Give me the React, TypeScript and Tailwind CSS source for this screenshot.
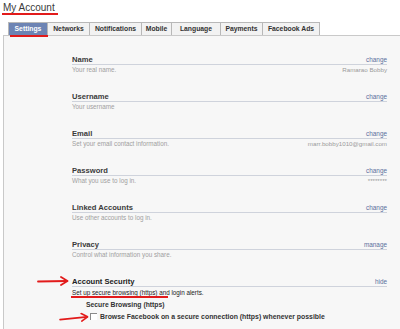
const tabs = [
  { name: 'Settings', w: 'w-[40px]', active: true },
  { name: 'Networks', w: 'w-[42px]' },
  { name: 'Notifications', w: 'w-[52px]' },
  { name: 'Mobile', w: 'w-[30px]' },
  { name: 'Language', w: 'w-[49px]' },
  { name: 'Payments', w: 'w-[42px]' },
  { name: 'Facebook Ads', w: 'w-[57px]' },
];

const rows = [
  { label: 'Name', link: 'change', desc: 'Your real name.', value: 'Ramarao Bobby' },
  { label: 'Username', link: 'change', desc: 'Your username', value: '' },
  { label: 'Email', link: 'change', desc: 'Set your email contact information.', value: 'marr.bobby1010@gmail.com' },
  { label: 'Password', link: 'change', desc: 'What you use to log in.', value: '********' },
  { label: 'Linked Accounts', link: 'change', desc: 'Use other accounts to log in.', value: '' },
  { label: 'Privacy', link: 'manage', desc: 'Control what information you share.', value: '' },
];

const Arrow = ({ className }: { className: string }) => (
  <svg className={className} viewBox="0 0 32 10" fill="none">
    <path d="M1 5.5 L30 5" stroke="#e21b1b" strokeWidth="1.8" strokeLinecap="round" />
    <path d="M24 1 L30.5 5 L24 9" stroke="#e21b1b" strokeWidth="1.8" strokeLinecap="round" strokeLinejoin="round" />
  </svg>
);

const App = () => {
  return (
    <div className="relative h-[329px] w-[400px] overflow-hidden bg-white font-['Liberation_Sans',Arial,sans-serif]">
      {/* title */}
      <div className="h-[22px] pl-[3px] pt-[2px] text-[10px] leading-[11px] text-[#3a3a3a]">My Account</div>

      {/* tabs */}
      <div className="flex h-[13px] pl-[8px]">
        {tabs.map((t) => (
          <div
            key={t.name}
            className={`${t.w} flex items-center justify-center border-t border-r border-[#b8b8b8] text-[6.8px] font-bold leading-none ${
              t.active ? 'border-l border-[#5a6f9e] bg-[#6d84b4] text-white' : 'bg-[#f2f2f2] text-[#333]'
            }`}
          >
            {t.name}
          </div>
        ))}
      </div>

      {/* content */}
      <div className="ml-[3px] h-[300px] border-t border-l border-[#c9c9c9] bg-[#f7f7f7] pl-[68px] pr-[13px] pt-[19px]">
        {rows.map((r) => (
          <div key={r.label} className="h-[37px]">
            <div className="flex h-[10px] items-end justify-between border-b border-[#cfd3dc]">
              <span className="text-[7.6px] font-bold leading-[9px] text-[#3a3a3a]">{r.label}</span>
              <span className="text-[6.4px] leading-[9px] text-[#5b6f9d]">{r.link}</span>
            </div>
            <div className="flex h-[9px] items-center justify-between">
              <span className="text-[6.3px] leading-[9px] text-[#a0a0a0]">{r.desc}</span>
              <span className="text-[6.2px] leading-[9px] text-[#9a9a9a]">{r.value}</span>
            </div>
          </div>
        ))}

        <div>
          <div className="flex h-[10px] items-end justify-between border-b border-[#cfd3dc]">
            <span className="text-[7.6px] font-bold leading-[9px] text-[#222]">Account Security</span>
            <span className="text-[6.4px] leading-[9px] text-[#5b6f9d]">hide</span>
          </div>
          <div className="flex h-[10px] items-center">
            <span className="text-[6.3px] leading-[9px] text-[#222]">Set up secure browsing (https) and login alerts.</span>
          </div>
          <div className="flex h-[14px] items-center pl-[14px]">
            <span className="text-[6.8px] font-bold leading-[9px] text-[#333]">Secure Browsing (https)</span>
          </div>
          <div className="flex h-[10px] items-center gap-[3px] pl-[18px]">
            <span className="h-[7px] w-[7px] border-t border-l border-[#8a8a8a] bg-white" />
            <span className="text-[6.9px] font-bold leading-[9px] text-[#333]">
              Browse Facebook on a secure connection (https) whenever possible
            </span>
          </div>
        </div>
      </div>

      {/* red annotations */}
      <div className="absolute left-[2px] top-[13px] h-[2px] w-[56px] bg-[#e21b1b]" />
      <div className="absolute left-[10px] top-[35px] h-[2px] w-[38px] bg-[#e21b1b]" />
      <div className="absolute left-[71px] top-[296px] h-[2px] w-[97px] bg-[#e21b1b]" />
      <Arrow className="absolute left-[37px] top-[276px] h-[10px] w-[32px]" />
      <Arrow className="absolute left-[59px] top-[313px] h-[10px] w-[30px] -rotate-[5deg]" />
    </div>
  );
};

export default App;
